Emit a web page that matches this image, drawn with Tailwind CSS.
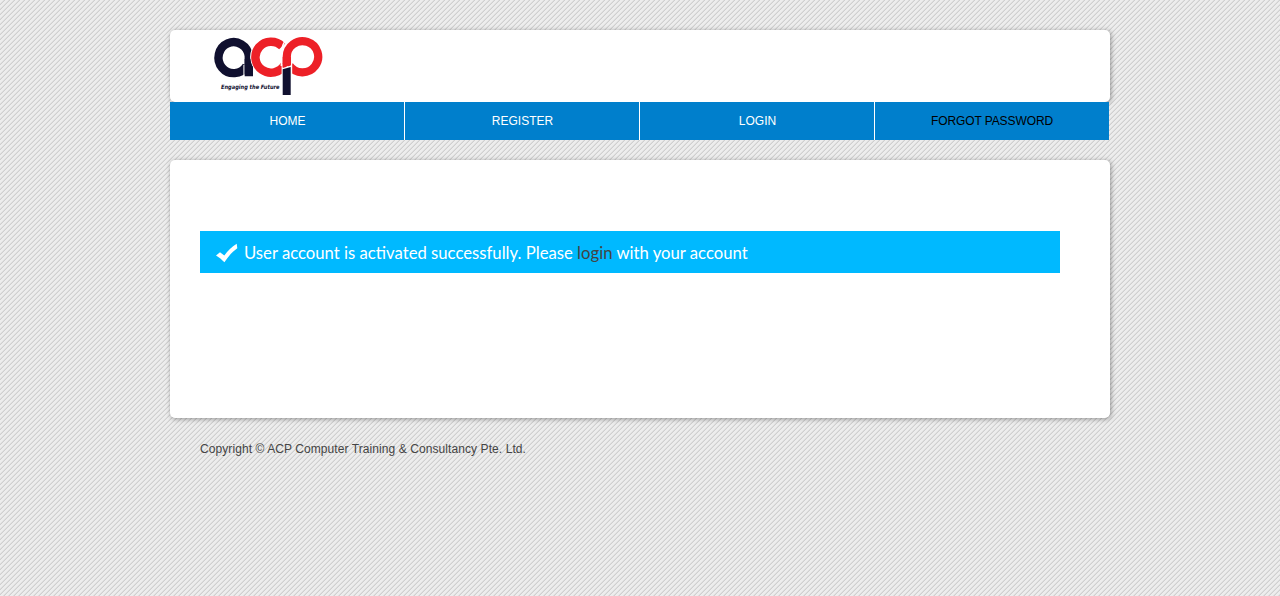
<!DOCTYPE html>
<html lang="en">
<head>
<meta charset="utf-8">
<title>ACP Computer Training</title>
<script src="https://cdn.jsdelivr.net/npm/@tailwindcss/browser@4"></script>
</head>
<body class="h-[596px] overflow-hidden bg-[#ebebeb] bg-[linear-gradient(135deg,#ededed_35%,#dedede_35%,#dedede_45%,#d0d0d0_45%,#d0d0d0_55%,#ededed_55%,#ededed_85%,#dedede_85%)] bg-[length:5px_5px] font-['Liberation_Sans',Arial,sans-serif] text-xs text-[#444]">
<div class="mx-auto w-[940px] pt-[30px]">
  <header class="h-[72px] rounded-[5px] bg-white pl-[42px] pt-[5px] shadow-[1px_1px_5px_rgba(0,0,0,0.38)]">
    <svg class="block" width="114" height="63" viewBox="0 0 114 63" fill="none">
      <path d="M36.8 40V21A15.2 15.5 0 1 0 34.5 31" stroke="#10102f" stroke-width="8.4"/>
      <path d="M31.4 30H32.6V43H31.4Z" fill="#fff"/>
      <path d="M32.6 41.2H45V43H32.6Z" fill="#fff"/>
      <circle cx="58.5" cy="22" r="15.6" stroke="#fff" stroke-width="9.6"/>
      <path d="M32.7 24H38.3C39 28 39.7 30 41 32V41.2H32.7Z" fill="#10102f"/>
      <path d="M70.2 11.4A15.6 15.5 0 1 0 72.5 30" stroke="#ed2027" stroke-width="8.5"/>
      <path d="M76 3C71.5 7 69.4 12 69.4 18V31" stroke="#fff" stroke-width="1.6"/>
      <path d="M74.8 31V22A15.7 15.6 0 1 1 77.5 30.5" stroke="#ed2027" stroke-width="8.2"/>
      <path d="M69.6 29H70.7V43H69.6ZM70.7 33L78.7 30.6L79 28H80.2V43H70.7Z" fill="#fff"/>
      <path d="M70.7 22H78.9V30L70.7 32Z" fill="#ed2027"/>
      <path d="M70.7 34.2L78.7 32V60H70.7Z" fill="#10102f"/>
      <text x="9" y="53.5" textLength="58.5" lengthAdjust="spacingAndGlyphs" font-family="DejaVu Sans, sans-serif" font-size="6" font-weight="700" font-style="italic" fill="#10102f">Engaging the Future</text>
    </svg>
  </header>
  <nav class="relative flex h-[38px] w-[939px] gap-px bg-white text-center leading-[38px] text-white">
    <a class="w-[234px] bg-[#007fcc] pl-px">HOME</a>
    <a class="w-[234px] bg-[#007fcc] pl-px">REGISTER</a>
    <a class="w-[234px] bg-[#007fcc] pl-px">LOGIN</a>
    <a class="w-[234px] bg-[#007fcc] tracking-[-0.1px] text-black">FORGOT PASSWORD</a>
  </nav>
  <main class="mt-5 h-[258px] rounded-[5px] bg-white px-[30px] pt-[71px] shadow-[1px_1px_5px_rgba(0,0,0,0.38)]">
    <div class="flex h-[42px] w-[860px] items-center bg-[#00b9ff] pl-4">
      <svg width="28" height="42" viewBox="0 0 28 42"><path d="M0 24.5L4 21.2L8.3 24.4C12 19.5 15.5 16 20.7 12.7L21.3 17.2C16.5 20.5 12.2 25.4 8.4 31.3C6 28.7 3 26.3 0 24.5Z" fill="#fff"/></svg>
      <p class="mt-0.5 whitespace-nowrap font-[Lato,sans-serif] text-[16.7px] leading-[42px] text-white">User account is activated successfully. Please <a class="text-[#444]">login</a> with your account</p>
    </div>
  </main>
  <footer class="ml-[30px] mt-[22px] whitespace-nowrap leading-[18px] tracking-[0.08px]">Copyright © ACP Computer Training &amp; Consultancy Pte. Ltd.</footer>
</div>
</body>
</html>
